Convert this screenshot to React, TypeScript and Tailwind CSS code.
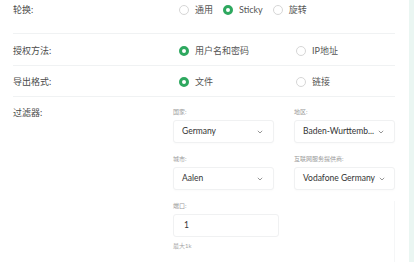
import type { ReactNode } from "react";

const font = { fontFamily: 'Lato, "Noto Sans CJK SC", sans-serif' };

function Radio({ checked, label }: { checked?: boolean; label: ReactNode }) {
  return (
    <label className="flex items-center gap-[6px]">
      <span
        className={
          checked
            ? "box-border h-[10px] w-[10px] rounded-full border-[3px] border-[#2ea85f] bg-white"
            : "box-border h-[10px] w-[10px] rounded-full border border-[#d6d6d6] bg-white"
        }
      />
      <span className="text-[9px] leading-[14px] text-[#555]">{label}</span>
    </label>
  );
}

function Row({
  label,
  className,
  children,
}: {
  label: string;
  className: string;
  children: ReactNode;
}) {
  return (
    <div className={`flex border-b border-[#f0f2f3] ${className}`}>
      <div className="w-[165px] text-[9px] leading-[14px] text-[#4a4a4a]">{label}</div>
      <div className="flex flex-1">{children}</div>
    </div>
  );
}

function Field({
  label,
  children,
  hint,
}: {
  label: string;
  children: ReactNode;
  hint?: string;
}) {
  return (
    <div className="flex flex-col">
      <div className="mb-[3px] h-[10px] text-[6px] leading-[10px] text-[#9a9a9a]">{label}</div>
      {children}
      {hint ? <div className="mt-[4px] text-[6px] leading-[10px] text-[#a5a5a5]">{hint}</div> : null}
    </div>
  );
}

function Select({ value }: { value: string }) {
  return (
    <div className="flex h-[23px] w-[101px] items-center justify-between rounded-[3px] border border-[#f0f1f2] bg-white pl-[8px] pr-[10px] shadow-[0_1px_2px_rgba(0,0,0,0.02)]">
      <span className="whitespace-nowrap text-[8.5px] text-[#333]">{value}</span>
      <svg width="6" height="4" viewBox="0 0 6 4" className="ml-[4px] shrink-0">
        <path d="M0.8 0.8 L3 3 L5.2 0.8" fill="none" stroke="#8a8a8a" strokeWidth="0.9" />
      </svg>
    </div>
  );
}

export default function App() {
  return (
    <div className="flex h-[262px] w-[414px] overflow-hidden bg-white" style={font}>
      <div className="w-[409px] pl-[13px] pr-[14px]">
        <Row label="轮换:" className="h-[34px] items-start pt-[3px]">
          <div className="flex items-center gap-[10px] pl-[1px]">
            <Radio label="通用" />
            <Radio checked label={<span className="text-[9px]">Sticky</span>} />
            <Radio label="旋转" />
          </div>
        </Row>
        <Row label="授权方法:" className="h-[32px] items-center pt-[2px]">
          <div className="flex items-center pl-[1px]">
            <div className="w-[117px]">
              <Radio checked label="用户名和密码" />
            </div>
            <Radio label="IP地址" />
          </div>
        </Row>
        <Row label="导出格式:" className="h-[31px] items-center pt-[1px]">
          <div className="flex items-center pl-[1px]">
            <div className="w-[117px]">
              <Radio checked label="文件" />
            </div>
            <Radio label="链接" />
          </div>
        </Row>
        <div className="flex pt-[9px]">
          <div className="w-[166px] text-[9px] leading-[14px] text-[#4a4a4a]">过滤器:</div>
          <div className="flex flex-1 gap-[15px] pt-[1px]">
            <div className="flex flex-col gap-[11px]">
              <Field label="国家:">
                <Select value="Germany" />
              </Field>
              <Field label="城市:">
                <Select value="Aalen" />
              </Field>
              <Field label="端口:" hint="最大1k">
                <div className="flex h-[23px] w-[106px] items-center rounded-[3px] border border-[#f0f1f2] bg-white pl-[10px] text-[8.5px] text-[#333]">
                  1
                </div>
              </Field>
            </div>
            <div className="flex flex-col gap-[11px]">
              <Field label="地区:">
                <Select value="Baden-Wurttemb..." />
              </Field>
              <Field label="互联网服务提供商:">
                <Select value="Vodafone Germany" />
              </Field>
              <div className="h-[80px] w-[101px] border-r border-[#f5f6f7]" />
            </div>
          </div>
        </div>
      </div>
      <div className="flex-1 bg-[#eaf6f2]" />
    </div>
  );
}
